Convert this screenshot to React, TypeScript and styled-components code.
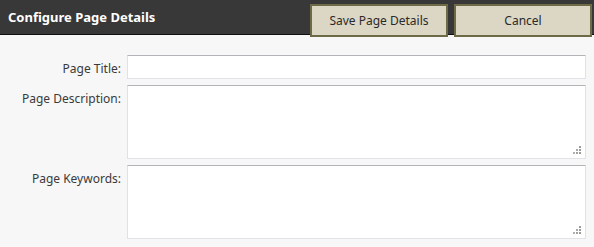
import styled, { createGlobalStyle } from 'styled-components';

const GlobalStyle = createGlobalStyle`
    html, body {
        margin: 0;
        padding: 0;
        background: #f7f7f7;
    }
    body {
        font-family: "Noto Sans", "DejaVu Sans", sans-serif;
    }
`;

const Page = styled.div`
    width: 594px;
    height: 247px;
    background: #f7f7f7;
    overflow: hidden;
`;

const Header = styled.div`
    height: 34px;
    background: #383838;
    border-bottom: 1px solid #111;
    display: flex;
    align-items: flex-start;
    justify-content: space-between;
    padding: 0 2px 0 8px;
`;

const Title = styled.h1`
    margin: 0;
    font-size: 13px;
    line-height: 34px;
    font-weight: bold;
    color: #fff;
`;

const Actions = styled.div`
    display: flex;
    gap: 6px;
    padding-top: 4px;
    position: relative;
    z-index: 1;
`;

const Button = styled.button<{ $w: number }>`
    width: ${p => p.$w}px;
    height: 33px;
    background: #dcd6c4;
    border: 2px solid #6d6a47;
    border-radius: 0;
    font-family: inherit;
    font-size: 12px;
    color: #2a2a2a;
    padding: 0;
    cursor: pointer;
`;

const Form = styled.div`
    display: grid;
    grid-template-columns: 121px 1fr;
    column-gap: 6px;
    row-gap: 6px;
    padding: 20px 8px 0 0;
`;

const Label = styled.label`
    text-align: right;
    font-size: 12px;
    line-height: 16px;
    padding-top: 6px;
    color: #3a3a3a;
`;

const fieldBorder = `
    border: 1px solid #e1e1e8;
    border-top-color: #b4b4b8;
    background: #fff;
    box-sizing: border-box;
    width: 100%;
    margin: 0;
    outline: none;
    font-family: inherit;
    font-size: 12px;
`;

const TextInput = styled.input`
    ${fieldBorder}
    height: 24px;
    padding: 2px 4px;
`;

const AreaWrap = styled.div`
    position: relative;
    height: 74px;
`;

const TextArea = styled.textarea`
    ${fieldBorder}
    height: 74px;
    padding: 4px;
    resize: none;
    display: block;
`;

const Grip = styled.svg`
    position: absolute;
    right: 4px;
    bottom: 4px;
`;

const ResizeGrip = () => (
    <Grip width="9" height="9" viewBox="0 0 9 9">
        <rect x="6" y="0" width="2" height="2" fill="#9a9a9a" />
        <rect x="3" y="3" width="2" height="2" fill="#aaa" />
        <rect x="6" y="3" width="2" height="2" fill="#9a9a9a" />
        <rect x="0" y="6" width="2" height="2" fill="#b0b0b0" />
        <rect x="3" y="6" width="2" height="2" fill="#a0a0a0" />
        <rect x="6" y="6" width="2" height="2" fill="#9a9a9a" />
    </Grip>
);

export default function App() {
    return (
        <Page>
            <GlobalStyle />
            <Header>
                <Title>Configure Page Details</Title>
                <Actions>
                    <Button $w={138}>Save Page Details</Button>
                    <Button $w={138}>Cancel</Button>
                </Actions>
            </Header>
            <Form>
                <Label>Page Title:</Label>
                <TextInput type="text" />
                <Label>Page Description:</Label>
                <AreaWrap>
                    <TextArea />
                    <ResizeGrip />
                </AreaWrap>
                <Label>Page Keywords:</Label>
                <AreaWrap>
                    <TextArea />
                    <ResizeGrip />
                </AreaWrap>
            </Form>
        </Page>
    );
}
